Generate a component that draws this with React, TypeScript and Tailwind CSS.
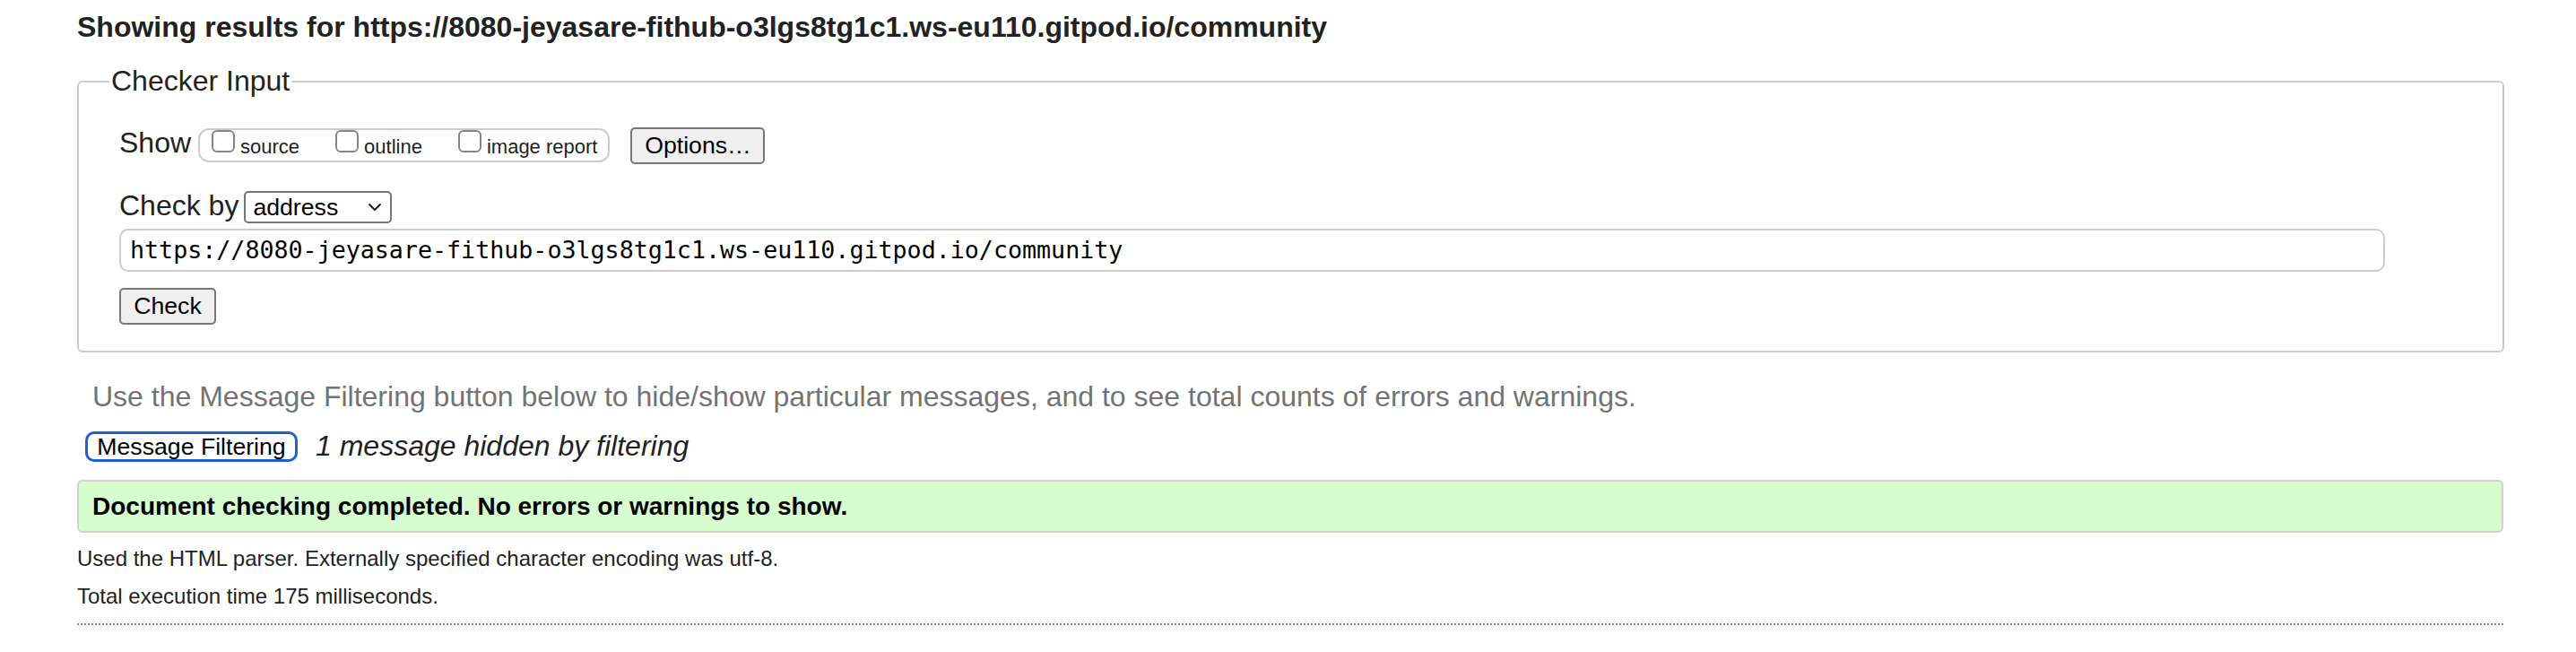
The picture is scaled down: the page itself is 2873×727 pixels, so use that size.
import React from "react";

function Box({ label, last }: { label: string; last?: boolean }) {
  return (
    <div className={`flex items-start ${last ? "" : "mr-[40px]"}`}>
      <span className="block w-[26px] h-[25px] border-2 border-[#858585] rounded-[6px] bg-white" />
      <span className="ml-[6px] mt-[6px] text-[22px] leading-[25px] text-[#222]">{label}</span>
    </div>
  );
}

export default function App() {
  return (
    <div
      className="w-full h-[727px] bg-white text-[#222] pt-[12px] pl-[86px] overflow-hidden"
      style={{ fontFamily: '"Liberation Sans", Arial, sans-serif' }}
    >
      <h2 className="text-[32px] font-bold leading-[37px] whitespace-nowrap">
        Showing results for https://8080-jeyasare-fithub-o3lgs8tg1c1.ws-eu110.gitpod.io/community
      </h2>

      <fieldset className="mt-[23px] w-[2707px] border-2 border-[#cccccc] rounded-[6px]">
        <legend className="ml-[34px] px-[2px] text-[32px] leading-[37px]">Checker Input</legend>
        <div className="pl-[45px] pt-[32px] pb-[29px]">
          <div className="flex items-start">
            <span className="text-[32px] leading-[37px]">Show</span>
            <div className="ml-[8px] mt-[2px] h-[38px] border-2 border-[#cccccc] rounded-[12px] pl-[13px] pr-[12px] flex items-start">
              <Box label="source" />
              <Box label="outline" />
              <Box label="image report" last />
            </div>
            <button className="ml-[23px] mt-[1px] h-[41px] w-[150px] border-2 border-[#767676] rounded-[5px] bg-[#efefef] text-[26.67px] leading-[31px] text-black">
              Options…
            </button>
          </div>

          <div className="mt-[28px] flex items-start">
            <span className="text-[32px] leading-[37px]">Check by</span>
            <div className="ml-[6px] mt-[2px] h-[36px] w-[165px] border-2 border-[#767676] rounded-[5px] bg-white flex items-center pl-[8px] pr-[8px] justify-between">
              <span className="text-[26.67px] leading-[31px] text-black">address</span>
              <svg width="16" height="10" viewBox="0 0 16 10" className="mr-[1px]">
                <path d="M1.5 1.5 L8 8 L14.5 1.5" fill="none" stroke="#111" strokeWidth="1.8" />
              </svg>
            </div>
          </div>

          <div
            className="mt-[6px] h-[48px] w-[2527px] border-2 border-[#cccccc] rounded-[10px] bg-white flex items-center pl-[10px] text-[26.67px] text-black"
            style={{ fontFamily: '"DejaVu Sans Mono", monospace' }}
          >
            https://8080-jeyasare-fithub-o3lgs8tg1c1.ws-eu110.gitpod.io/community
          </div>

          <button className="mt-[18px] block h-[41px] w-[108px] border-2 border-[#767676] rounded-[5px] bg-[#efefef] text-[26.67px] leading-[31px] text-black">
            Check
          </button>
        </div>
      </fieldset>

      <p className="mt-[31px] pl-[17px] text-[32px] leading-[37px] text-[#737373] whitespace-nowrap">
        Use the Message Filtering button below to hide/show particular messages, and to see total counts of errors and warnings.
      </p>

      <div className="mt-[18px] h-[37px] flex items-center pl-[9px]">
        <button className="h-[34px] w-[237px] border-[3px] border-[#1f5fcf] rounded-[10px] bg-white text-[26.67px] leading-[28px] text-black">
          Message Filtering
        </button>
        <span className="ml-[20px] text-[32px] leading-[37px] italic text-[#222]">1 message hidden by filtering</span>
      </div>

      <div className="mt-[19px] h-[59px] w-[2706px] border-2 border-[#c8d8c4] rounded-[6px] bg-[#d7fcd0] flex items-center pl-[15px]">
        <span className="text-[28px] font-bold leading-[32px] text-black">
          Document checking completed. No errors or warnings to show.
        </span>
      </div>

      <p className="mt-[15px] text-[24px] leading-[28px] text-[#222]">
        Used the HTML parser. Externally specified character encoding was utf-8.
      </p>
      <p className="mt-[14px] text-[24px] leading-[28px] text-[#222]">Total execution time 175 milliseconds.</p>

      <div className="mt-[16px] w-[2706px] border-t-2 border-dotted border-[#8a8a8a]" />
    </div>
  );
}
